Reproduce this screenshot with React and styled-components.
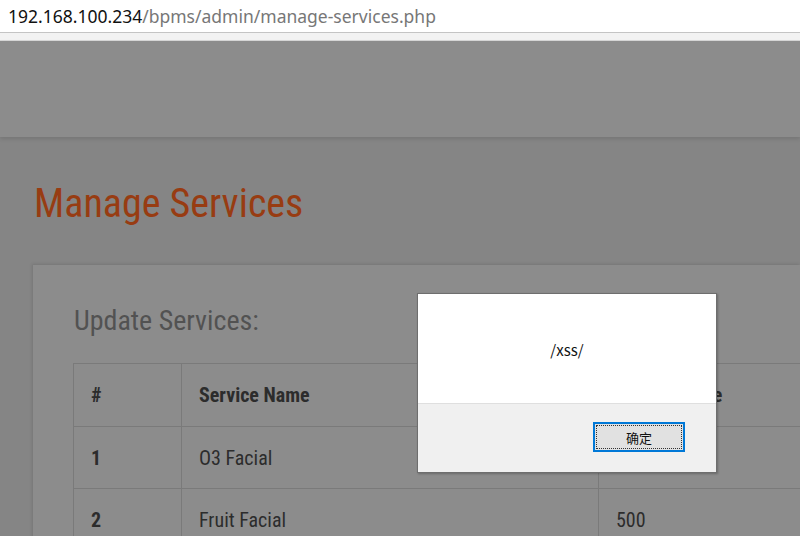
import React from "react";
import styled, { createGlobalStyle } from "styled-components";

const GlobalStyle = createGlobalStyle`
  html, body {
    margin: 0;
    padding: 0;
    width: 800px;
    height: 536px;
    overflow: hidden;
    background: #858585;
  }
`;

const Screen = styled.div`
  position: relative;
  width: 800px;
  height: 536px;
  overflow: hidden;
  font-family: "Roboto Condensed", "Liberation Sans Narrow", Roboto, sans-serif;
`;

const AddressBar = styled.div`
  height: 33px;
  background: #fff;
  border-bottom: 1px solid #c4c4c4;
  padding-left: 8px;
  display: flex;
  align-items: center;
  font-family: "Noto Sans", "Open Sans", sans-serif;
  font-size: 17.5px;
  color: #777;
  box-sizing: border-box;
`;

const Host = styled.span`
  color: #111;
`;

const Strip = styled.div`
  height: 7px;
  background: #f2f2f2;
  border-bottom: 1px solid #d8d8d8;
`;

const TopNav = styled.div`
  height: 96px;
  background: #8c8c8c;
  box-shadow: 0 2px 4px rgba(0, 0, 0, 0.12);
  position: relative;
`;

const Main = styled.div`
  padding: 42px 0 0 33px;
`;

const Title = styled.h1`
  margin: 0 0 36px 1px;
  font-weight: 400;
  font-size: 40px;
  line-height: 50px;
  color: #983c12;
`;

const Card = styled.div`
  background: #8c8c8c;
  box-shadow: -1px -1px 3px rgba(0, 0, 0, 0.12);
  padding: 38px 0 0 40px;
  height: 400px;
`;

const CardTitle = styled.h2`
  margin: 0 0 24px 1px;
  font-weight: 400;
  font-size: 28px;
  line-height: 36px;
  color: #525252;
`;

const Table = styled.table`
  border-collapse: collapse;
  width: 800px;
`;

const Row = styled.tr`
  height: ${(p) => (p.$head ? "63px" : "62px")};
`;

const Cell = styled.td`
  border: 1px solid #7a7a7a;
  padding: 0 17px;
  font-size: 20px;
  color: #2c2c2c;
  font-weight: ${(p) => (p.$bold ? 700 : 400)};
  width: ${(p) => p.$w || "auto"};
  box-sizing: border-box;
`;

const Dialog = styled.div`
  position: absolute;
  left: 417px;
  top: 293px;
  width: 300px;
  height: 180px;
  border: 1px solid #6e6e6e;
  box-sizing: border-box;
  box-shadow: 1px 1px 2px rgba(0, 0, 0, 0.25);
  display: flex;
  flex-direction: column;
  font-family: "Noto Sans CJK SC", "Noto Sans", sans-serif;
`;

const DialogBody = styled.div`
  height: 110px;
  background: #fff;
  border-bottom: 1px solid #dfdfdf;
  display: flex;
  align-items: center;
  justify-content: center;
  font-size: 15px;
  color: #111;
  padding-top: 2px;
  box-sizing: border-box;
`;

const DialogFoot = styled.div`
  flex: 1;
  background: #f0f0f0;
  display: flex;
  justify-content: flex-end;
  align-items: flex-start;
  padding: 18px 31px 0 0;
`;

const OkButton = styled.button`
  width: 92px;
  height: 30px;
  background: #e1e1e1;
  border: 2px solid #0078d7;
  outline: 1px dotted #333;
  outline-offset: -4px;
  font-family: "Noto Sans CJK SC", sans-serif;
  font-size: 13px;
  color: #111;
  padding: 0;
`;

const rows = [
  ["1", "O3 Facial", ""],
  ["2", "Fruit Facial", "500"],
];

export default function App() {
  return (
    <Screen>
      <GlobalStyle />
      <AddressBar>
        <Host>192.168.100.234</Host>/bpms/admin/manage-services.php
      </AddressBar>
      <Strip />
      <TopNav />
      <Main>
        <Title>Manage Services</Title>
        <Card>
          <CardTitle>Update Services:</CardTitle>
          <Table>
            <tbody>
              <Row $head>
                <Cell $bold $w="108px">#</Cell>
                <Cell $bold $w="417px">Service Name</Cell>
                <Cell $bold>Service Price</Cell>
              </Row>
              {rows.map((r) => (
                <Row key={r[0]}>
                  <Cell $bold>{r[0]}</Cell>
                  <Cell>{r[1]}</Cell>
                  <Cell>{r[2]}</Cell>
                </Row>
              ))}
            </tbody>
          </Table>
        </Card>
      </Main>
      <Dialog>
        <DialogBody>/xss/</DialogBody>
        <DialogFoot>
          <OkButton>确定</OkButton>
        </DialogFoot>
      </Dialog>
    </Screen>
  );
}
